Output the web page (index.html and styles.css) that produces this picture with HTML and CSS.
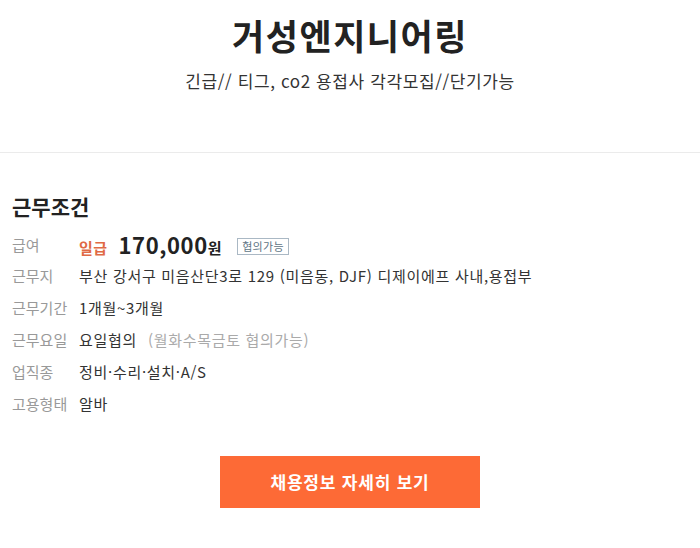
FILE: index.html
```html
<!DOCTYPE html>
<html lang="ko">
<head>
    <meta charset="UTF-8">
    <meta name="viewport" content="width=device-width, initial-scale=1.0">
    <title>거성엔지니어링</title>
    <link rel="stylesheet" href="styles.css">
</head>
<body>

    <!-- 회사명 / 공고 제목 -->
    <div class="header">
        <h1>거성엔지니어링</h1>
        <p class="subtitle">긴급// 티그, co2 용접사 각각모집//단기가능</p>
    </div>

    <!-- 근무조건 -->
    <div class="section">
        <h2>근무조건</h2>

        <div class="row pay-row">
            <span class="label">급여</span>
            <span class="value">
                <span class="pay-type">일급</span>
                <span class="pay-amount">170,000</span><span class="pay-unit">원</span>
                <span class="tag">협의가능</span>
            </span>
        </div>
        <div class="row">
            <span class="label">근무지</span>
            <span class="value">부산 강서구 미음산단3로 129 (미음동, DJF) 디제이에프 사내,용접부</span>
        </div>
        <div class="row">
            <span class="label">근무기간</span>
            <span class="value">1개월~3개월</span>
        </div>
        <div class="row">
            <span class="label">근무요일</span>
            <span class="value">요일협의 <span class="note">(월화수목금토 협의가능)</span></span>
        </div>
        <div class="row">
            <span class="label">업직종</span>
            <span class="value">정비·수리·설치·A/S</span>
        </div>
        <div class="row">
            <span class="label">고용형태</span>
            <span class="value">알바</span>
        </div>

        <div class="button-wrapper">
            <a class="detail-btn" href="#">채용정보 자세히 보기</a>
        </div>
    </div>

</body>
</html>
```

FILE: styles.css
```css
body {
    font-family: "Noto Sans CJK KR", "Noto Sans", sans-serif;
    background-color: #fff;
    color: #222;
    margin: 0;
    padding: 0;
}

.header {
    text-align: center;
    padding-top: 10px;
    height: 142px;
    border-bottom: 1px solid #ebebeb;
}

h1 {
    margin: 0;
    font-size: 35px;
    font-weight: bold;
    line-height: 50px;
    letter-spacing: 1.5px;
    color: #222;
}

.subtitle {
    margin: 10px 0 0;
    font-size: 17px;
    line-height: 22px;
    letter-spacing: 0.6px;
    color: #333;
}

.section {
    padding: 38px 12px 0;
}

h2 {
    margin: 0 0 8px;
    font-size: 21px;
    font-weight: bold;
    line-height: 30px;
    color: #222;
}

.row {
    display: flex;
    align-items: center;
    height: 32px;
    font-size: 15px;
    letter-spacing: 0.7px;
}

.label {
    width: 67px;
    flex-shrink: 0;
    color: #999;
    letter-spacing: 0;
}

.value {
    color: #333;
}

.pay-row {
    height: 30px;
}

.pay-type {
    color: #e06a45;
    font-weight: bold;
    letter-spacing: 0.5px;
    margin-right: 6px;
}

.pay-amount {
    font-size: 22px;
    font-weight: bold;
    letter-spacing: 0.6px;
    color: #222;
}

.pay-unit {
    font-size: 15px;
    font-weight: bold;
    color: #222;
    margin-right: 10px;
}

.tag {
    display: inline-block;
    font-size: 11px;
    line-height: 15px;
    padding: 0 4px;
    letter-spacing: 0.3px;
    color: #607585;
    border: 1px solid #aab8c4;
    vertical-align: 3px;
}

.note {
    color: #aaa;
    margin-left: 6px;
}

.button-wrapper {
    display: flex;
    justify-content: center;
    margin-top: 37px;
}

.detail-btn {
    display: block;
    width: 260px;
    height: 52px;
    line-height: 52px;
    text-align: center;
    background-color: #fd6a36;
    color: #fff;
    font-size: 17px;
    font-weight: bold;
    letter-spacing: 0.8px;
    text-decoration: none;
}
```
